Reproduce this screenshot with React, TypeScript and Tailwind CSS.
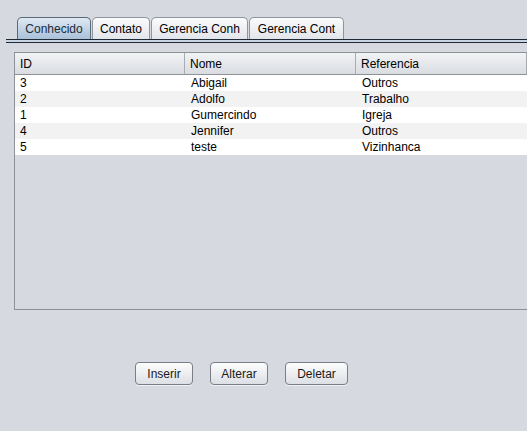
import React from "react";

const rows = [
  ["3", "Abigail", "Outros"],
  ["2", "Adolfo", "Trabalho"],
  ["1", "Gumercindo", "Igreja"],
  ["4", "Jennifer", "Outros"],
  ["5", "teste", "Vizinhanca"],
];

function Tab({ label, w, selected }: { label: string; w: number; selected?: boolean }) {
  return (
    <div
      style={{ width: w }}
      className={
        "h-[22px] flex items-center justify-center border border-b-0 rounded-t-[5px] text-[12px] " +
        (selected
          ? "border-[#5c6a78] bg-gradient-to-b from-[#dfe9f3] to-[#a9c1d9] text-[#1a2a3a]"
          : "border-[#8f959c] bg-gradient-to-b from-[#fbfbfc] to-[#e2e5ea] text-black")
      }
    >
      {label}
    </div>
  );
}

function Btn({ label, w }: { label: string; w: number }) {
  return (
    <div
      style={{ width: w }}
      className="h-[23px] flex items-center justify-center rounded-[4px] border border-[#7a7f87] bg-gradient-to-b from-[#fdfdfd] to-[#dcdfe4] text-[12px] text-[#1a1a1a] shadow-[0_1px_0_#f0f1f3]"
    >
      {label}
    </div>
  );
}

export default function App() {
  return (
    <div
      className="w-[527px] h-[431px] bg-[#d6d9df] overflow-hidden flex flex-col"
      style={{ fontFamily: '"Liberation Sans", Arial, sans-serif' }}
    >
      <div className="pt-[17px] pl-[17px] flex gap-[1px]">
        <Tab label="Conhecido" w={74} selected />
        <Tab label="Contato" w={58} />
        <Tab label="Gerencia Conh" w={97} />
        <Tab label="Gerencia Cont" w={95} />
      </div>
      <div className="ml-[6px] h-[4px] border-t border-b border-[#1f2a36] bg-[#c8d4e2]" />
      <div className="ml-[14px] mt-[9px] h-[258px] border-l border-t border-b border-[#8e9297] bg-[#d6d9df] flex flex-col">
        <div className="h-[22px] flex text-[12px] border-b border-[#8e9297] bg-gradient-to-b from-[#f2f3f5] to-[#d9dce1]">
          <div className="w-[170px] pl-[5px] flex items-center border-r border-[#a8acb2]">ID</div>
          <div className="w-[171px] pl-[5px] flex items-center border-r border-[#a8acb2]">Nome</div>
          <div className="flex-1 pl-[5px] flex items-center border-r border-[#a8acb2]">Referencia</div>
        </div>
        {rows.map((r, i) => (
          <div
            key={i}
            className={"h-[16px] flex text-[12px] leading-[16px] text-black " + (i % 2 === 0 ? "bg-white" : "bg-[#f2f2f2]")}
          >
            <div className="w-[170px] pl-[5px]">{r[0]}</div>
            <div className="w-[171px] pl-[6px]">{r[1]}</div>
            <div className="flex-1 pl-[6px]">{r[2]}</div>
          </div>
        ))}
      </div>
      <div className="mt-[52px] pl-[135px] flex gap-[17px]">
        <Btn label="Inserir" w={58} />
        <Btn label="Alterar" w={58} />
        <Btn label="Deletar" w={63} />
      </div>
    </div>
  );
}
